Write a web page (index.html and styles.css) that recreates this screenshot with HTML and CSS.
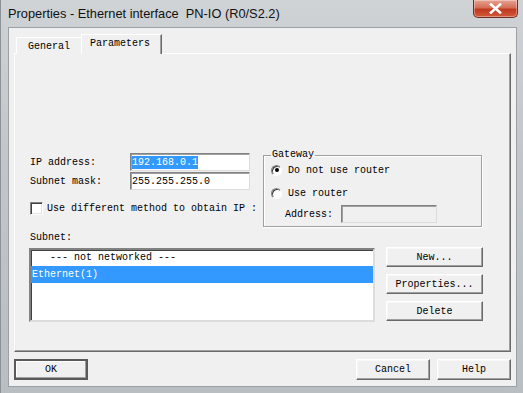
FILE: index.html
```html
<!DOCTYPE html>
<html lang="en">
<head>
  <meta charset="UTF-8" />
  <title>Properties - Ethernet interface PN-IO (R0/S2.2)</title>
  <link rel="stylesheet" href="styles.css">
</head>
<body>

<div class="window">
  <div class="titlebar">
    <span class="title">Properties - Ethernet interface&nbsp; PN-IO (R0/S2.2)</span>
    <button class="close" title="Close">
      <svg width="13" height="11" viewBox="0 0 13 11"><path d="M2 1.5 L11 9.5 M11 1.5 L2 9.5" stroke="#fff" stroke-width="2.6" stroke-linecap="square"/></svg>
    </button>
  </div>

  <div class="client">
    <div class="tabs">
      <div class="tab">General</div>
      <div class="tab selected">Parameters</div>
    </div>

    <div class="panel">
      <div class="top">
        <div class="fields">
          <div class="field">
            <label>IP address:</label>
            <div class="edit"><span class="sel">192.168.0.1</span></div>
          </div>
          <div class="field">
            <label>Subnet mask:</label>
            <div class="edit">255.255.255.0</div>
          </div>
          <div class="check">
            <span class="box"></span>
            <span>Use different method to obtain IP :</span>
          </div>
        </div>

        <fieldset class="group">
          <legend>Gateway</legend>
          <div class="radio-row"><span class="radio checked"></span>Do not use router</div>
          <div class="radio-row second"><span class="radio"></span>Use router</div>
          <div class="addr-row">
            <span class="addr-label">Address:</span>
            <div class="edit disabled"></div>
          </div>
        </fieldset>
      </div>

      <div class="subnet-label">Subnet:</div>
      <div class="subnet">
        <ul class="listbox">
          <li>   --- not networked ---</li>
          <li class="current">Ethernet(1)</li>
        </ul>
        <div class="side-buttons">
          <button class="btn">New...</button>
          <button class="btn">Properties...</button>
          <button class="btn">Delete</button>
        </div>
      </div>
    </div>

    <div class="footer">
      <button class="btn default">OK</button>
      <button class="btn push">Cancel</button>
      <button class="btn">Help</button>
    </div>
  </div>
</div>

</body>
</html>
```

FILE: styles.css
```css
body {
  margin: 0;
  width: 523px;
  height: 393px;
  overflow: hidden;
  font-family: 'Liberation Mono', 'DejaVu Sans Mono', monospace;
  font-size: 10px;
  color: #000;
}

.window {
  height: 393px;
  display: flex;
  flex-direction: column;
  background: linear-gradient(to bottom, #cfd3d6, #c2c6ca 40%, #b9bec2);
  border-left: 1px solid #8d9296;
  box-sizing: border-box;
}

/* Title bar */
.titlebar {
  height: 27px;
  flex-shrink: 0;
  display: flex;
  align-items: flex-start;
  padding: 0 5px 0 7px;
}

.title {
  font-family: 'Liberation Sans', Arial, sans-serif;
  font-size: 12.8px;
  line-height: 27px;
  color: #111;
}

.close {
  margin-left: auto;
  width: 45px;
  height: 18px;
  padding: 0;
  border: 1px solid #6f2f26;
  border-top: none;
  border-radius: 0 0 5px 5px;
  background: linear-gradient(to bottom, #e8a392, #d56e58 45%, #c0391f 55%, #d35a3c);
  display: flex;
  align-items: center;
  justify-content: center;
  box-shadow: inset 0 0 0 1px rgba(255, 255, 255, 0.35);
}

/* Client area */
.client {
  flex: 1;
  margin: 0 6px 6px 7px;
  background: #f0f0f0;
  border: 1px solid #9ba0a4;
  padding: 7px 5px 0 5px;
  display: flex;
  flex-direction: column;
}

.tabs {
  display: flex;
  align-items: flex-end;
  height: 19px;
  flex-shrink: 0;
  padding-left: 2px;
  position: relative;
  z-index: 1;
  margin-bottom: -1px;
}

.tab {
  height: 17px;
  width: 65px;
  box-sizing: border-box;
  text-align: center;
  line-height: 17px;
  background: #f0f0f0;
  border: 1px solid #fff;
  border-bottom: none;
  border-right: none;
}

.tab.selected {
  height: 20px;
  width: 81px;
  line-height: 17px;
  border-right: 1px solid #696969;
  box-shadow: inset -1px 0 #a0a0a0;
  padding-right: 3px;
}

.panel {
  height: 299px;
  flex-shrink: 0;
  box-sizing: border-box;
  border: 1px solid;
  border-color: #fff #696969 #696969 #fff;
  box-shadow: inset -1px -1px #a0a0a0;
  padding: 95px 0 0 15px;
}

/* Address fields */
.top {
  display: flex;
  align-items: flex-start;
}

.fields {
  width: 233px;
  margin-top: 4px;
  white-space: nowrap;
}

.field {
  display: flex;
  height: 18px;
  margin-bottom: 1px;
  align-items: center;
}

.field label {
  width: 100px;
}

.edit {
  width: 120px;
  height: 18px;
  box-sizing: border-box;
  background: #fff;
  border: 1px solid;
  border-color: #828282 #dcdcdc #dcdcdc #828282;
  box-shadow: inset 1px 1px #a0a0a0;
  line-height: 17px;
  padding-left: 1px;
}

.edit .sel {
  background: #3399ff;
  color: #fff;
  padding: 1px 0;
}

.edit.disabled {
  width: 96px;
  background: #f0f0f0;
}

.check {
  display: flex;
  align-items: center;
  margin-top: 12px;
  height: 13px;
}

.check .box {
  width: 13px;
  height: 13px;
  box-sizing: border-box;
  background: #fff;
  border: 1px solid;
  border-color: #828282 #fff #fff #828282;
  box-shadow: inset 1px 1px #404040, inset -1px -1px #e3e3e3;
  margin-right: 4px;
  flex-shrink: 0;
}

/* Gateway group */
.group {
  width: 219px;
  height: 78px;
  box-sizing: border-box;
  margin: 0;
  padding: 0 0 0 7px;
  border: 1px solid #a0a0a0;
  box-shadow: 1px 1px #fff, inset 1px 1px #fff;
}

.group legend {
  padding: 0 1px;
  margin-left: 0;
  line-height: 12px;
}

.radio-row {
  display: flex;
  align-items: center;
  height: 14px;
  margin-top: 2px;
}

.radio-row.second {
  margin-top: 9px;
}

.radio {
  width: 11px;
  height: 11px;
  box-sizing: border-box;
  border-radius: 50%;
  border: 1px solid;
  border-color: #808080 #fff #fff #808080;
  background: #fff;
  box-shadow: inset 1px 1px #404040;
  margin-right: 6px;
  display: flex;
  align-items: center;
  justify-content: center;
}

.radio.checked::after {
  content: "";
  width: 4px;
  height: 4px;
  border-radius: 50%;
  background: #000;
}

.addr-row {
  display: flex;
  align-items: center;
  margin: 5px 0 0 14px;
}

.addr-label {
  width: 56px;
}

/* Subnet list */
.subnet-label {
  margin-top: 4px;
  line-height: 13px;
}

.subnet {
  display: flex;
  margin-top: 3px;
}

.listbox {
  list-style: none;
  margin: 1px 0 0 -1px;
  padding: 0;
  width: 346px;
  height: 74px;
  box-sizing: border-box;
  background: #fff;
  border: 2px solid;
  border-color: #828282 #dcdcdc #dcdcdc #828282;
  box-shadow: inset 1px 1px #404040;
}

.listbox li {
  height: 16px;
  line-height: 16px;
  white-space: pre;
  padding-left: 1px;
}

.listbox li.current {
  height: 17px;
  line-height: 17px;
  background: #3399ff;
  color: #fff;
}

.side-buttons {
  display: flex;
  flex-direction: column;
  gap: 7px;
  margin-left: 11px;
}

/* Buttons */
.btn {
  font-family: inherit;
  font-size: 10px;
  color: #000;
  width: 97px;
  height: 20px;
  padding: 0;
  background: #f0f0f0;
  border: 1px solid;
  border-color: #fff #696969 #696969 #fff;
  box-shadow: inset -1px -1px #a0a0a0, inset 1px 1px #f8f8f8;
}

.footer {
  display: flex;
  gap: 7px;
  margin-top: 7px;
}

.footer .btn {
  width: 74px;
  height: 21px;
}

.btn.default {
  border: 2px solid #5a5a5a;
  box-shadow: inset -1px -1px #a0a0a0, inset 1px 1px #fff;
}

.push {
  margin-left: auto;
}
```
